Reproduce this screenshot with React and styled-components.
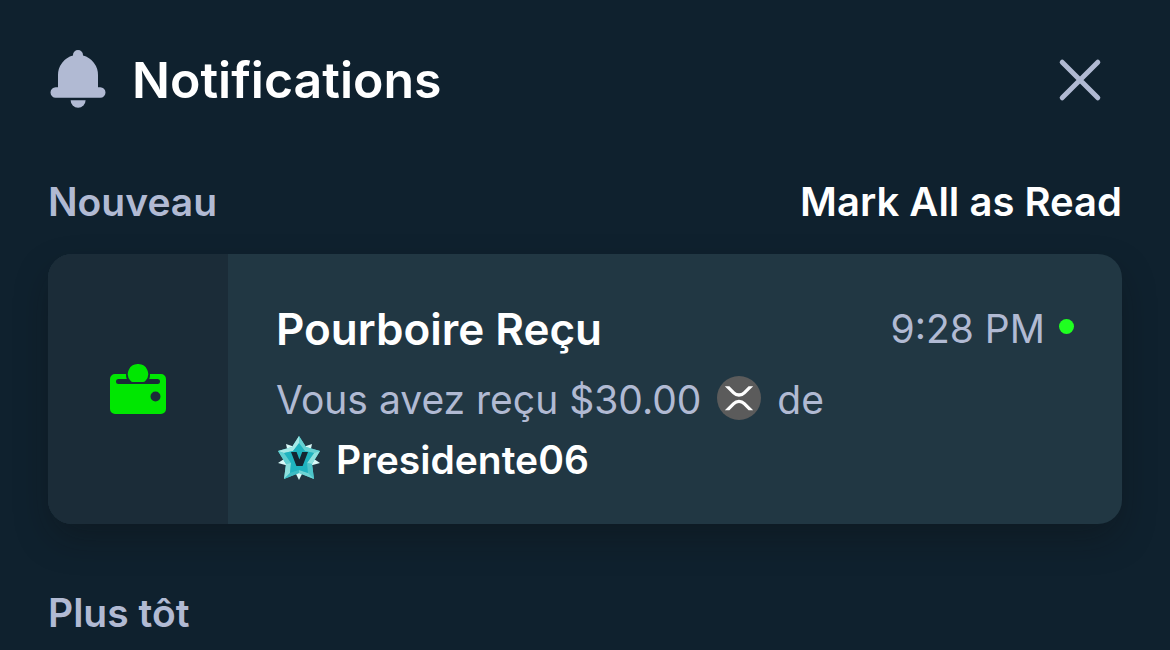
import styled, { createGlobalStyle } from "styled-components";

const GlobalStyle = createGlobalStyle`
  * {
    box-sizing: border-box;
  }

  body {
    margin: 0;
    background-color: #0f212e;
    color: #fff;
    font-family: "Inter", "Liberation Sans", sans-serif;
    font-size: 39px;
    line-height: 60px;
  }

  button {
    padding: 0;
    border: none;
    background: none;
    color: inherit;
    font: inherit;
    cursor: pointer;
  }

  svg {
    display: block;
    flex-shrink: 0;
  }
`;

const Panel = styled.main`
  display: flex;
  flex-direction: column;
  padding: 40px 48px 0;
`;

const Header = styled.header`
  display: flex;
  align-items: center;
  justify-content: space-between;
  height: 80px;
  padding-right: 20px;
`;

const Heading = styled.div`
  display: flex;
  align-items: center;
  gap: 24px;
`;

const Title = styled.h1`
  margin: 0;
  font-size: 50px;
  font-weight: 600;
`;

const SectionBar = styled.div`
  display: flex;
  align-items: center;
  justify-content: space-between;
  margin-top: 52px;
`;

const SectionTitle = styled.h2`
  margin: 0;
  color: #b1bad3;
  font-size: 39px;
  font-weight: 600;
`;

const MarkButton = styled.button`
  font-size: 40px;
  font-weight: 600;
`;

const Card = styled.article`
  display: grid;
  grid-template-columns: 180px 1fr;
  margin: 22px 0 7px;
  border-radius: 24px;
  background-color: #213743;
  box-shadow: 0 16px 36px -4px rgba(14, 14, 14, 0.35);
  overflow: hidden;
`;

const CardIcon = styled.div`
  display: flex;
  align-items: center;
  justify-content: center;
  background-color: #1b2c38;
`;

const CardBody = styled.div`
  padding: 40px 48px 34px;
`;

const CardTop = styled.div`
  display: flex;
  align-items: center;
  justify-content: space-between;
  height: 70px;
  margin-bottom: 6px;
`;

const CardTitle = styled.h3`
  margin: 0;
  font-size: 44px;
  font-weight: 600;
`;

const Time = styled.time`
  display: flex;
  align-items: center;
  gap: 14px;
  color: #b1bad3;
`;

const UnreadDot = styled.span`
  width: 15px;
  height: 15px;
  margin-bottom: 6px;
  border-radius: 50%;
  background-color: #1fff20;
`;

const Message = styled.p`
  display: flex;
  flex-wrap: wrap;
  align-items: center;
  column-gap: 16px;
  margin: 0;
  color: #b1bad3;
`;

const Sender = styled.div`
  display: flex;
  align-items: center;
  gap: 14px;
  font-weight: 600;
`;

const InlineIcon = styled.span`
  padding-bottom: 4px;
`;

function BellIcon() {
  return (
    <svg width="60" height="60" viewBox="0 0 60 60" fill="#b1bad3" aria-hidden="true">
      <path d="M25 5a5 5 0 0 1 10 0v.6A20 20 0 0 1 50 25v12.300h2.300a5.200 5.200 0 0 1 0 10.400H7.700a5.200 5.200 0 0 1 0-10.400H10V25A20 20 0 0 1 25 5.600z" />
      <path d="M22.600 50.200h15a7.500 7.500 0 0 1-15 0z" />
    </svg>
  );
}

function CloseIcon() {
  return (
    <svg width="44" height="44" viewBox="0 0 44 44" stroke="#b1bad3" strokeWidth="5" strokeLinecap="round" aria-hidden="true">
      <path d="M4.200 4.200l35.600 35.600M39.800 4.200L4.200 39.800" />
    </svg>
  );
}

function WalletIcon() {
  return (
    <svg width="56" height="50" viewBox="0 0 56 50" fill="#00e701" aria-hidden="true">
      <path
        fillRule="evenodd"
        d="M5 10h11a12 12 0 0 0 .8 5H8.500a2.500 2.500 0 0 0 0 5h39a2.500 2.500 0 0 0 0-5H39.200a12 12 0 0 0 .8-5H51a5 5 0 0 1 5 5v30a5 5 0 0 1-5 5H5a5 5 0 0 1-5-5V15a5 5 0 0 1 5-5zm40.500 17.500a5 5 0 1 0 0 10 5 5 0 0 0 0-10z"
      />
      <path d="M28 0a10 10 0 0 1 7.500 16.800q-1 1.200-2.300 1.200H22.800q-1.300 0-2.300-1.200A10 10 0 0 1 28 0z" />
    </svg>
  );
}

function XrpIcon() {
  return (
    <svg width="44" height="44" viewBox="0 0 44 44" aria-hidden="true">
      <circle cx="22" cy="22" r="22" fill="#5b5b5b" />
      <path
        d="M7.800 10.200h4.600l5.500 5.500a5.900 5.900 0 0 0 8.200 0l5.500-5.500h4.600l-7.800 7.800a9 9 0 0 1-12.800 0zM7.800 34.200h4.600l5.500-5.500a5.900 5.900 0 0 1 8.200 0l5.500 5.500h4.600l-7.800-7.800a9 9 0 0 0-12.800 0z"
        fill="#fff"
      />
    </svg>
  );
}

function VipIcon() {
  return (
    <svg width="46" height="46" viewBox="0 0 46 46" aria-hidden="true">
      <path d="M10 9l9 3-7 6zM36 9l-9 3 7 6zM2 28l9-6 2 9zM44 28l-9-6-2 9zM23 45l-4-8h8z" fill="#d9f9f8" />
      <path d="M23 1l7 11 14 4-8 13 2 15-15-6-15 6 2-15-8-13 14-4z" fill="#4cc5ca" />
      <path d="M23 1v8l-6 7-9 2-6-2 14-4z" fill="#a5e8e6" />
      <path d="M23 1v8l6 7 9 2 6-2-14-4z" fill="#66d0d2" />
      <path d="M2 16l6 2 7 10-5 1z" fill="#5fcfd1" />
      <path d="M44 16l-6 2-7 10 5 1z" fill="#8ee1de" />
      <path d="M10 29l5-1-1 10-6 6z" fill="#8ce0dd" />
      <path d="M36 29l-5-1 1 10 6 6z" fill="#4cc5ca" />
      <path d="M8 44l6-6 9-3v3z" fill="#3dbcc4" />
      <path d="M38 44l-6-6-9-3v3z" fill="#70d5d5" />
      <path d="M23 8l6 8 9 2-7 10 1 10-9-3-9 3 1-10-7-10 9-2z" fill="#1fb3bf" />
      <path d="M15 17h5.600l2.800 7.600 2.800-7.600H32l-5.400 14h-6.200z" fill="#142632" />
    </svg>
  );
}

function Notification({ title, time, amount, sender }) {
  return (
    <Card>
      <CardIcon>
        <WalletIcon />
      </CardIcon>
      <CardBody>
        <CardTop>
          <CardTitle>{title}</CardTitle>
          <Time>
            {time}
            <UnreadDot />
          </Time>
        </CardTop>
        <Message>
          <span>Vous avez reçu {amount}</span>
          <InlineIcon>
            <XrpIcon />
          </InlineIcon>
          <span>de</span>
        </Message>
        <Sender>
          <InlineIcon>
            <VipIcon />
          </InlineIcon>
          {sender}
        </Sender>
      </CardBody>
    </Card>
  );
}

function App() {
  return (
    <>
      <GlobalStyle />
      <Panel>
        <Header>
          <Heading>
            <BellIcon />
            <Title>Notifications</Title>
          </Heading>
          <button type="button" aria-label="Close">
            <CloseIcon />
          </button>
        </Header>
        <SectionBar>
          <SectionTitle>Nouveau</SectionTitle>
          <MarkButton type="button">Mark All as Read</MarkButton>
        </SectionBar>
        <Notification
          title="Pourboire Reçu"
          time="9:28 PM"
          amount="$30.00"
          sender="Presidente06"
        />
        <SectionBar>
          <SectionTitle>Plus tôt</SectionTitle>
        </SectionBar>
      </Panel>
    </>
  );
}

export default App;
